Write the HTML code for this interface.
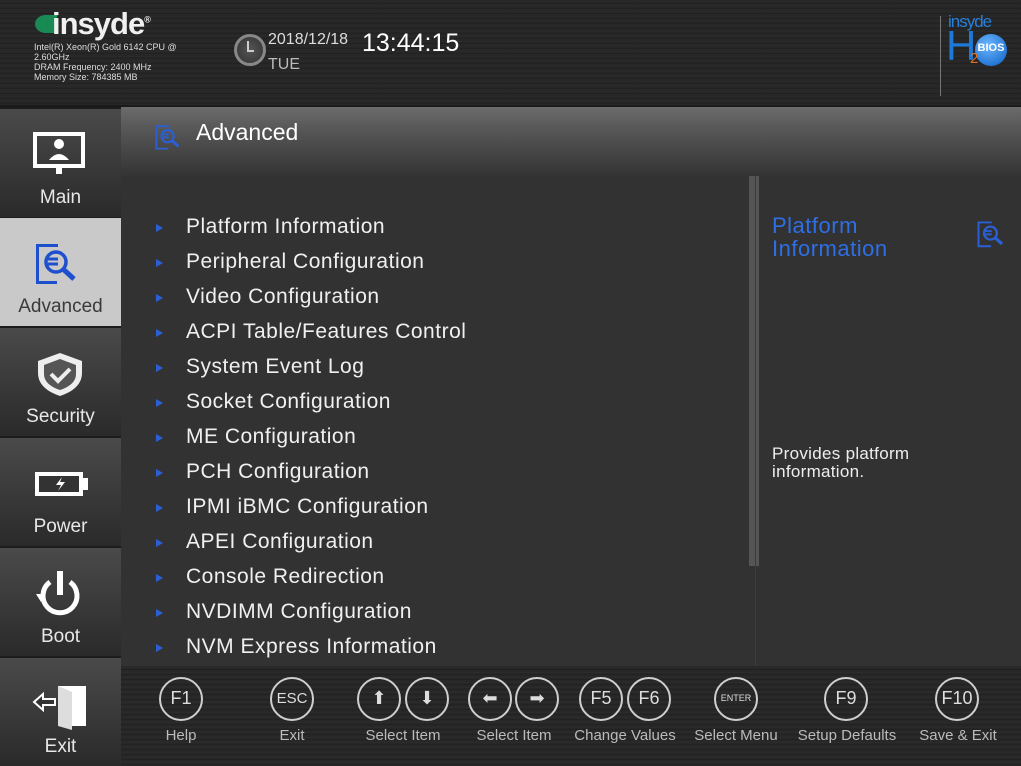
<!DOCTYPE html>
<html><head><meta charset="utf-8"><style>
*{margin:0;padding:0;box-sizing:border-box}
body{width:1021px;height:766px;overflow:hidden;background:#323232;font-family:"Liberation Sans",sans-serif;position:relative;color:#eee}
.top{position:absolute;left:0;top:0;width:1021px;height:107px;background:repeating-linear-gradient(180deg,#262626 0,#2c2c2c 2px,#1f1f1f 3px,#2a2a2a 5px);border-bottom:2px solid #1a1a1a}
.side{position:absolute;left:0;top:107px;width:121px;height:659px;background:#1c1c1c}
.tab{position:absolute;left:0;width:121px;height:108px;background:linear-gradient(180deg,#4a4a4a,#2a2a2a);text-align:center;color:#e8e8e8;font-size:19px}
.tab.sel{background:#c9c9c9;color:#3a3a3a}
.tab svg{position:absolute;left:32px;top:22px}
.tab span{position:absolute;left:0;right:0;bottom:8px}
.hdr{position:absolute;left:121px;top:107px;width:900px;height:70px;background:linear-gradient(180deg,#6b6b6b 0,#555 35%,#333 100%)}
.item{position:absolute;left:186px;font-size:21px;letter-spacing:0.5px;color:#f0f0f0}
.arr{position:absolute;left:156px;width:0;height:0;border-left:7px solid #2a5fd6;border-top:4px solid transparent;border-bottom:4px solid transparent}
.foot{position:absolute;left:121px;top:666px;width:900px;height:100px;background:repeating-linear-gradient(180deg,#262626 0,#2d2d2d 2px,#1f1f1f 3px,#292929 5px)}
.k{position:absolute;top:677px;width:44px;height:44px;border:2.5px solid #cfcfcf;border-radius:50%;color:#ddd;font-size:18px;text-align:center;line-height:39px;font-family:"Liberation Sans Narrow","Liberation Sans",sans-serif}
.lbl{position:absolute;top:727px;font-size:15px;color:#bbb;text-align:center;width:110px;font-family:"Liberation Sans Narrow","Liberation Sans",sans-serif}
</style></head><body>
<div class="top">
 <div style="position:absolute;left:35px;top:15px;width:22px;height:18px;background:#1a8a55;border-radius:50% 0 0 50%"></div>
 <div style="position:absolute;left:52px;top:6px;font-size:31px;font-weight:bold;color:#f0f0f0;letter-spacing:-1px">insyde<sup style="font-size:9px">®</sup></div>
 <div style="position:absolute;left:34px;top:42px;font-size:9px;line-height:10px;color:#ddd">Intel(R) Xeon(R) Gold 6142 CPU @<br>2.60GHz<br>DRAM Frequency: 2400 MHz<br>Memory Size: 784385 MB</div>
 <div style="position:absolute;left:234px;top:34px;width:32px;height:32px;border-radius:50%;background:radial-gradient(#555,#333);border:3px solid #888"></div>
 <div style="position:absolute;left:247px;top:41px;width:2px;height:10px;background:#ccc"></div>
 <div style="position:absolute;left:247px;top:50px;width:7px;height:2px;background:#ccc"></div>
 <div style="position:absolute;left:268px;top:31px;font-size:16px;color:#ddd">2018/12/18</div>
 <div style="position:absolute;left:268px;top:56px;font-size:16px;color:#bbb">TUE</div>
 <div style="position:absolute;left:362px;top:29px;font-size:25px;color:#fff">13:44:15</div>
 <div style="position:absolute;left:940px;top:16px;width:1px;height:80px;background:#777"></div>
 <div style="position:absolute;left:948px;top:12px;font-size:17px;color:#2a7fd8;letter-spacing:-1px">insyde</div>
 <div style="position:absolute;left:946px;top:26px;font-size:42px;color:#1e78d8;line-height:40px">H</div>
 <div style="position:absolute;left:975px;top:34px;width:32px;height:32px;border-radius:50%;background:radial-gradient(circle at 40% 35%,#6cb6ff,#0a5fc4);color:#fff;font-size:11px;font-weight:bold;text-align:center;line-height:28px">BIOS</div>
 <div style="position:absolute;left:970px;top:50px;font-size:15px;color:#e07020">2</div>
</div>
<div class="side">
 <div class="tab" style="top:2px"><svg width="56" height="50" viewBox="0 0 56 50"><rect x="3" y="3" width="48" height="32" fill="none" stroke="#fff" stroke-width="4"/><circle cx="27" cy="13" r="5" fill="#fff"/><path d="M17 29q10-12 20 0z" fill="#fff"/><rect x="24" y="37" width="6" height="6" fill="#fff"/></svg><span>Main</span></div>
 <div class="tab sel" style="top:111px"><svg width="56" height="50" viewBox="0 0 56 50"><path d="M4 4h22v3H7v34h18v3H4z" fill="#1e4fcf"/><circle cx="24" cy="22" r="10" fill="none" stroke="#1e4fcf" stroke-width="3.5"/><path d="M16 19h10M16 24h10" stroke="#1e4fcf" stroke-width="3"/><path d="M31 29l11 10" stroke="#1e4fcf" stroke-width="5"/></svg><span>Advanced</span></div>
 <div class="tab" style="top:221px"><svg width="56" height="50" viewBox="0 0 56 50"><path d="M28 3l22 8v12c0 12-10 19-22 23C16 42 6 35 6 23V11z" fill="#eee"/><path d="M28 9l16 6v9c0 8-7 13-16 16-9-3-16-8-16-16v-9z" fill="#555"/><path d="M19 24l7 7 12-12" stroke="#eee" stroke-width="4" fill="none"/></svg><span>Security</span></div>
 <div class="tab" style="top:331px"><svg width="60" height="50" viewBox="0 0 60 50"><rect x="3" y="12" width="48" height="24" fill="#fff"/><rect x="7" y="16" width="40" height="16" fill="#333"/><rect x="51" y="18" width="5" height="12" fill="#fff"/><path d="M30 17l-6 8h5l-3 6 7-9h-5z" fill="#fff"/></svg><span>Power</span></div>
 <div class="tab" style="top:441px"><svg width="56" height="50" viewBox="0 0 56 50"><path d="M18 12A17 17 0 1 0 38 12" fill="none" stroke="#fff" stroke-width="5"/><rect x="25" y="1" width="6" height="24" fill="#fff"/><path d="M4 24l8 0-3 8z" fill="#fff"/></svg><span>Boot</span></div>
 <div class="tab" style="top:551px"><svg width="60" height="50" viewBox="0 0 60 50"><rect x="26" y="6" width="28" height="40" fill="#fff"/><path d="M26 6l14 6v38l-14-4z" fill="#ddd"/><path d="M2 22l9-8v5h12v6H11v5z" fill="#333" stroke="#fff" stroke-width="2"/></svg><span>Exit</span></div>
</div>
<div class="hdr">
 <svg style="position:absolute;left:32px;top:15px" width="34" height="32" viewBox="0 0 56 50"><path d="M4 4h22v3H7v34h18v3H4z" fill="#2a5fd6"/><circle cx="24" cy="22" r="10" fill="none" stroke="#2a5fd6" stroke-width="3.5"/><path d="M16 19h10M16 24h10" stroke="#2a5fd6" stroke-width="3"/><path d="M31 29l11 10" stroke="#2a5fd6" stroke-width="5"/></svg>
 <div style="position:absolute;left:75px;top:12px;font-size:23px;color:#fff">Advanced</div>
</div>
<div style="position:absolute;left:749px;top:176px;width:10px;height:390px;background:#555"></div>
<div style="position:absolute;left:755px;top:176px;width:1px;height:490px;background:#3c3c3c"></div>

<div class="arr" style="top:224px"></div><div class="item" style="top:215px">Platform Information</div>
<div class="arr" style="top:259px"></div><div class="item" style="top:250px">Peripheral Configuration</div>
<div class="arr" style="top:294px"></div><div class="item" style="top:285px">Video Configuration</div>
<div class="arr" style="top:329px"></div><div class="item" style="top:320px">ACPI Table/Features Control</div>
<div class="arr" style="top:364px"></div><div class="item" style="top:355px">System Event Log</div>
<div class="arr" style="top:399px"></div><div class="item" style="top:390px">Socket Configuration</div>
<div class="arr" style="top:434px"></div><div class="item" style="top:425px">ME Configuration</div>
<div class="arr" style="top:469px"></div><div class="item" style="top:460px">PCH Configuration</div>
<div class="arr" style="top:504px"></div><div class="item" style="top:495px">IPMI iBMC Configuration</div>
<div class="arr" style="top:539px"></div><div class="item" style="top:530px">APEI Configuration</div>
<div class="arr" style="top:574px"></div><div class="item" style="top:565px">Console Redirection</div>
<div class="arr" style="top:609px"></div><div class="item" style="top:600px">NVDIMM Configuration</div>
<div class="arr" style="top:644px"></div><div class="item" style="top:635px">NVM Express Information</div>

<div style="position:absolute;left:772px;top:214px;font-size:22px;line-height:23px;letter-spacing:0.5px;color:#2e6fe6">Platform<br>Information</div>
<svg style="position:absolute;left:975px;top:218px" width="36" height="34" viewBox="0 0 56 50"><path d="M4 4h22v3H7v34h18v3H4z" fill="#2a5fd6"/><circle cx="24" cy="22" r="10" fill="none" stroke="#2a5fd6" stroke-width="3.5"/><path d="M16 19h10M16 24h10" stroke="#2a5fd6" stroke-width="3"/><path d="M31 29l11 10" stroke="#2a5fd6" stroke-width="5"/></svg>
<div style="position:absolute;left:772px;top:445px;font-size:17px;line-height:18px;letter-spacing:0.3px;color:#eee">Provides platform<br>information.</div>

<div class="foot"></div>
<div class="k" style="left:159px">F1</div>
<div class="k" style="left:270px;font-size:15px">ESC</div>
<div class="k" style="left:357px">⬆</div><div class="k" style="left:405px">⬇</div>
<div class="k" style="left:468px">⬅</div><div class="k" style="left:515px">➡</div>
<div class="k" style="left:579px">F5</div><div class="k" style="left:627px">F6</div>
<div class="k" style="left:714px;font-size:9px">ENTER</div>
<div class="k" style="left:824px">F9</div>
<div class="k" style="left:935px">F10</div>
<div class="lbl" style="left:126px">Help</div>
<div class="lbl" style="left:237px">Exit</div>
<div class="lbl" style="left:348px">Select Item</div>
<div class="lbl" style="left:459px">Select Item</div>
<div class="lbl" style="left:570px">Change Values</div>
<div class="lbl" style="left:681px">Select Menu</div>
<div class="lbl" style="left:792px">Setup Defaults</div>
<div class="lbl" style="left:903px">Save &amp; Exit</div>
</body></html>
